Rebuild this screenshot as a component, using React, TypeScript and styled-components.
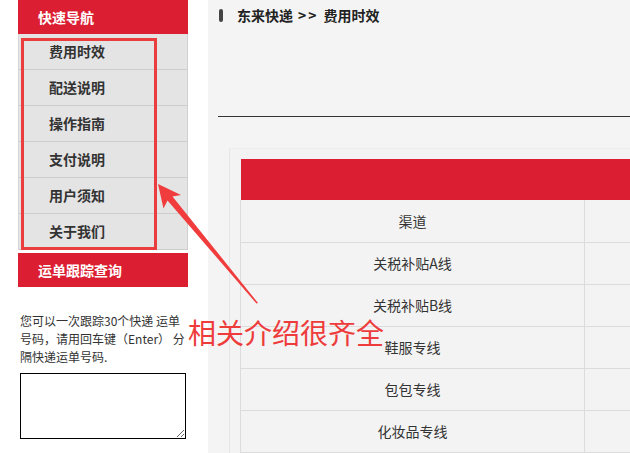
import React from "react";
import styled, { createGlobalStyle } from "styled-components";

const Global = createGlobalStyle`
  html, body { margin: 0; padding: 0; background: #fff; }
  body { font-family: "Noto Sans CJK SC", "Noto Sans", sans-serif; color: #333; }
  * { box-sizing: border-box; }
`;

const RED = "#dc1e32";

const Page = styled.div`
  position: relative;
  display: flex;
  gap: 20px;
  height: 453px;
  overflow: hidden;
  padding-left: 18px;
`;

const Sidebar = styled.aside`
  width: 170px;
  flex: none;
  display: flex;
  flex-direction: column;
`;

const SideHeader = styled.div<{ $top?: number }>`
  height: 34px;
  margin-top: ${(p) => p.$top ?? 0}px;
  background: ${RED};
  color: #fff;
  font-weight: 700;
  font-size: 14px;
  line-height: 34px;
  padding-left: 20px;
`;

const Menu = styled.ul`
  list-style: none;
  margin: 0;
  padding: 0;
`;

const MenuItem = styled.li`
  height: 36px;
  background: #e4e4e4;
  border-bottom: 1px solid #cdcdcd;
  border-right: 1px solid #d0d0d0;
  border-left: 1px solid #d6d6d6;
  font-size: 14px;
  font-weight: 700;
  color: #333;
  line-height: 35px;
  padding-left: 30px;
`;

const TrackNote = styled.p`
  margin: 25px 0 0 2px;
  font-size: 12px;
  line-height: 18px;
  color: #333;
  white-space: nowrap;
`;

const TrackInput = styled.textarea`
  display: block;
  margin: 7px 0 0 2px;
  width: 166px;
  height: 66px;
  border: 1px solid #000;
  background: #fff;
  resize: vertical;
`;

const Main = styled.main`
  flex: 1;
  min-width: 0;
  background: #f4f4f4;
  padding: 8px 0 0 10px;
  overflow: hidden;
`;

const Crumb = styled.div`
  display: flex;
  align-items: center;
  height: 14px;
  gap: 14px;
  font-size: 14px;
  font-weight: 700;
  color: #222;
`;

const CrumbBar = styled.span`
  width: 4px;
  height: 13px;
  margin-left: 1px;
  border-radius: 2px;
  background: #444;
`;

const Sep = styled.span`
  margin: 0 5px;
  letter-spacing: 2px;
`;

const Rule = styled.hr`
  margin: 94px 0 0;
  border: none;
  border-top: 1px solid #333;
`;

const Panel = styled.section`
  margin: 31px 0 0 11px;
  padding: 10px 0 0 10px;
  border-left: 1px solid #e6e6e6;
  border-top: 1px solid #ececec;
  background: #f3f3f3;
  width: 700px;
`;

const Table = styled.table`
  border-collapse: collapse;
  width: 680px;
  font-size: 14px;
  color: #333;
`;

const HeadRow = styled.tr`
  background: ${RED};
  height: 41px;
`;

const Row = styled.tr`
  height: 42px;
  background: #f3f3f3;
`;

const Cell = styled.td<{ $w?: number }>`
  width: ${(p) => (p.$w ? `${p.$w}px` : "auto")};
  border: 1px solid #dcdcdc;
  border-top: none;
  text-align: center;
  padding: 0;
`;

const HeadCell = styled.th`
  padding: 0;
  border: none;
`;

const Highlight = styled.div`
  position: absolute;
  left: 21px;
  top: 38px;
  width: 136px;
  height: 212px;
  border: 3px solid #ea3d3d;
  pointer-events: none;
`;

const Callout = styled.div`
  position: absolute;
  left: 188px;
  top: 316px;
  font-size: 28px;
  line-height: 32px;
  color: #ee3c3c;
  white-space: nowrap;
  pointer-events: none;
`;

const ArrowSvg = styled.svg`
  position: absolute;
  left: 0;
  top: 0;
  pointer-events: none;
`;

const menu = ["费用时效", "配送说明", "操作指南", "支付说明", "用户须知", "关于我们"];
const rows = ["渠道", "关税补贴A线", "关税补贴B线", "鞋服专线", "包包专线", "化妆品专线"];

export default function App() {
  return (
    <>
      <Global />
      <Page>
        <Sidebar>
          <SideHeader>快速导航</SideHeader>
          <Menu>
            {menu.map((m) => (
              <MenuItem key={m}>{m}</MenuItem>
            ))}
          </Menu>
          <SideHeader $top={3}>运单跟踪查询</SideHeader>
          <TrackNote>
            您可以一次跟踪30个快递 运单
            <br />
            号码，请用回车键（Enter） 分
            <br />
            隔快递运单号码.
          </TrackNote>
          <TrackInput />
        </Sidebar>
        <Main>
          <Crumb>
            <CrumbBar />
            <span>
              东来快递<Sep>&gt;&gt;</Sep>费用时效
            </span>
          </Crumb>
          <Rule />
          <Panel>
            <Table>
              <thead>
                <HeadRow>
                  <HeadCell />
                  <HeadCell />
                </HeadRow>
              </thead>
              <tbody>
                {rows.map((r) => (
                  <Row key={r}>
                    <Cell $w={344}>{r}</Cell>
                    <Cell />
                  </Row>
                ))}
              </tbody>
            </Table>
          </Panel>
        </Main>
        <Highlight />
        <ArrowSvg width="630" height="453" viewBox="0 0 630 453">
          <polygon
            points="158,184 181,195 172.5,196.5 258,303 256.5,303.5 167.5,200.5 163.5,208.5"
            fill="#f03c3c"
          />
        </ArrowSvg>
        <Callout>相关介绍很齐全</Callout>
      </Page>
    </>
  );
}
